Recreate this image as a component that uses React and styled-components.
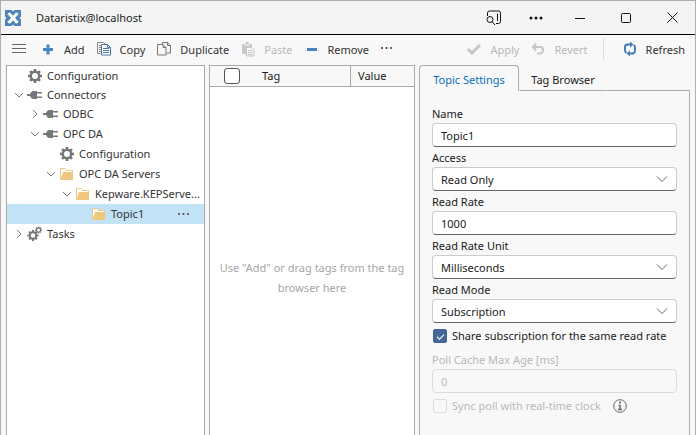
import styled, { createGlobalStyle } from "styled-components";

const GlobalStyle = createGlobalStyle`
  *, *::before, *::after {
    box-sizing: border-box;
  }

  body {
    margin: 0;
    background: #f8f8f8;
    overflow: hidden;
  }

  body, button, input, select {
    font-family: "Noto Sans", "Open Sans", sans-serif;
    font-size: 11px;
  }
`;

const Window = styled.div`
  display: flex;
  flex-direction: column;
  height: 100vh;
  overflow: hidden;
  border: 1px solid #b0b0b0;
  border-bottom: none;
  background: #f8f8f8;
  color: #333;
  line-height: 16px;
`;

const TitleBar = styled.header`
  display: flex;
  align-items: center;
  flex: none;
  height: 34px;
  padding-left: 4px;
  background: #f4f4f4;
  border-bottom: 1px solid #000;
`;

const Title = styled.h1`
  flex: 1;
  margin: 0 0 0 15px;
  font-size: 11px;
  font-weight: 400;
  color: #1a1a1a;
`;

const WindowButton = styled.button`
  display: flex;
  align-items: center;
  justify-content: center;
  width: ${(props) => (props.$narrow ? "42px" : "46px")};
  height: 32px;
  padding: 0;
  border: none;
  background: none;
  color: #111;
`;

const Toolbar = styled.div`
  display: flex;
  align-items: center;
  justify-content: space-between;
  flex: none;
  height: 30px;
  padding: 0 10px 2px;
`;

const ToolGroup = styled.div`
  display: flex;
  align-items: center;
  gap: 11px;
`;

const ToolButton = styled.button`
  display: flex;
  align-items: center;
  gap: 8px;
  height: 24px;
  padding: 0;
  border: none;
  background: none;
  color: #333;
  white-space: nowrap;

  &:disabled {
    color: #b8b8b8;
  }
`;

const Separator = styled.span`
  width: 1px;
  height: 22px;
  margin: 0 7px 0 4px;
  background: #dcdcdc;
`;

const Panels = styled.main`
  display: grid;
  grid-template-columns: minmax(0, 199fr) minmax(0, 206fr) minmax(0, 271fr);
  gap: 4px;
  flex: 1;
  min-height: 0;
  padding: 0 5px;
`;

const TreePanel = styled.nav`
  background: #fff;
  border: 1px solid #aaa;
  border-bottom: none;
`;

const TreeRow = styled.div`
  display: flex;
  align-items: center;
  height: ${(props) => (props.$level === 0 ? "19px" : "20px")};
  padding-left: ${(props) => props.$level * 16 + 4}px;
  background: ${(props) => (props.$selected ? "#c2e2f6" : "transparent")};
`;

const IconBox = styled.span`
  display: flex;
  align-items: center;
  justify-content: center;
  flex: none;
  width: 16px;
  height: 16px;
`;

const TreeLabel = styled.span`
  flex: 1;
  min-width: 0;
  margin-left: 4px;
  white-space: nowrap;
`;

const RowMenuButton = styled.button`
  display: flex;
  align-items: center;
  height: 16px;
  margin-right: 14px;
  padding: 0;
  border: none;
  background: none;
  color: #444;
`;

const TagPanel = styled.section`
  background: #fff;
  border: 1px solid #aaa;
  border-bottom: none;
`;

const TagTable = styled.table`
  width: 100%;
  border-collapse: separate;
  border-spacing: 0;
  table-layout: fixed;
  background: #f8f8f8;
`;

const HeadCell = styled.th`
  width: ${(props) => props.$width || "auto"};
  height: 21px;
  padding: 0 0 0 ${(props) => props.$pad}px;
  border-bottom: 1px solid #aaa;
  border-left: ${(props) => (props.$divided ? "1px solid #aaa" : "none")};
  font-weight: 400;
  text-align: left;
  color: #1a1a1a;
`;

const EmptyMessage = styled.p`
  margin: 0;
  padding: 171px 4px 0;
  line-height: 20px;
  text-align: center;
  color: #a6a6a6;
`;

const SettingsPanel = styled.section`
  display: flex;
  flex-direction: column;
`;

const TabList = styled.div`
  display: flex;
  height: 26px;
`;

const TabFiller = styled.div`
  flex: 1;
  border-bottom: 1px solid #aaa;
`;

const Tab = styled.button`
  width: ${(props) => (props.$active ? "100px" : "88px")};
  padding: 3px 0 0;
  border: 1px solid ${(props) => (props.$active ? "#aaa" : "transparent")};
  border-bottom-color: ${(props) => (props.$active ? "transparent" : "#aaa")};
  border-radius: ${(props) => (props.$active ? "4px 4px 0 0" : "0")};
  background: none;
  color: ${(props) => (props.$active ? "#0a6ebd" : "#1a1a1a")};
  white-space: nowrap;
`;

const Form = styled.form`
  flex: 1;
  padding: 12px 12px 0;
  border: 1px solid #aaa;
  border-width: 0 1px;
  color: #1a1a1a;
`;

const Label = styled.label`
  display: block;
  height: 20px;
  padding-top: 3px;
  color: ${(props) => (props.$disabled ? "#b8b8b8" : "inherit")};
`;

const FieldBox = styled.div`
  display: grid;
  align-items: center;
  height: 24px;
`;

const Input = styled.input`
  width: 100%;
  height: 24px;
  padding: 0 8px;
  border: 1px solid #ccc;
  border-bottom-color: #666;
  border-radius: 4px;
  background: #fff;
  color: #1a1a1a;

  &:disabled {
    border-color: #dcdcdc;
    background: #f8f8f8;
    color: #b8b8b8;
  }
`;

const Select = styled.select`
  grid-area: 1 / 1;
  width: 100%;
  height: 24px;
  padding: 0 28px 0 8px;
  appearance: none;
  border: 1px solid #ccc;
  border-bottom-color: #666;
  border-radius: 4px;
  background: #fff;
  color: #1a1a1a;
`;

const SelectArrow = styled.span`
  grid-area: 1 / 1;
  justify-self: end;
  display: flex;
  margin-right: 9px;
  pointer-events: none;
`;

const CheckRow = styled.div`
  display: flex;
  align-items: center;
  height: 26px;
  padding-left: 1px;
  white-space: nowrap;
  color: ${(props) => (props.$disabled ? "#b8b8b8" : "inherit")};
`;

const CheckLabel = styled.label`
  margin: 0 12px 0 5px;
`;

const Checkbox = styled.input`
  appearance: none;
  display: grid;
  place-items: center;
  flex: none;
  width: 14px;
  height: 14px;
  margin: 0;
  border: 1px solid #dcdcdc;
  border-radius: 2px;

  &:checked {
    border-color: #3f6190;
    background: #456896;
  }

  &:checked::before {
    content: "";
    width: 7px;
    height: 4px;
    border: solid #fff;
    border-width: 0 0 1px 1px;
    transform: rotate(-45deg);
  }
`;

const SelectAll = styled(Checkbox)`
  width: 16px;
  height: 16px;
  border-color: #555;
  border-radius: 3px;
  background: #fff;
`;

const Logo = () => (
  <svg width="16" height="16" viewBox="0 0 16 16" aria-hidden="true">
    <rect width="16" height="16" fill="#4d83b8" />
    <path d="M4 3.500l8 9M12 3.500l-8 9" stroke="#fff" strokeWidth="3" />
    <path d="M6.500 0h3L8 1.500zM6.500 16h3L8 14.500zM0 6.500v3L1.500 8zM16 6.500v3L14.500 8z" fill="#f4f4f4" />
    <path d="M2.500 4.500l2-2M11.500 2.500l2 2M2.500 11.500l2 2M13.500 11.500l-2 2" stroke="#fff" />
  </svg>
);

const SearchPaneIcon = () => (
  <svg width="16" height="16" viewBox="0 0 16 16" fill="none" stroke="currentColor" aria-hidden="true">
    <path d="M1.500 6V3a2 2 0 0 1 2-2h9a2 2 0 0 1 2 2v8.500a2 2 0 0 1-2 2H10M11.500 3.500v7.500" />
    <circle cx="4" cy="9.500" r="3" />
    <path d="M6.200 11.700L9 15" />
  </svg>
);

const DotsIcon = ({ size = 1.5, width = 13, height = 4 }) => (
  <svg width={width} height={height} viewBox={`0 0 ${width} ${height}`} fill="currentColor" aria-hidden="true">
    <circle cx="2" cy="2" r={size} />
    <circle cx={width / 2} cy="2" r={size} />
    <circle cx={width - 2} cy="2" r={size} />
  </svg>
);

const MinimizeIcon = () => (
  <svg width="10" height="10" viewBox="0 0 10 10" stroke="currentColor" aria-hidden="true">
    <path d="M0 5.500h10" />
  </svg>
);

const MaximizeIcon = () => (
  <svg width="10" height="10" viewBox="0 0 10 10" fill="none" stroke="currentColor" aria-hidden="true">
    <rect x="0.500" y="0.500" width="9" height="9" rx="1" />
  </svg>
);

const CloseIcon = () => (
  <svg width="11" height="11" viewBox="0 0 11 11" stroke="currentColor" aria-hidden="true">
    <path d="M0.500 0.500l10 10M10.500 0.500l-10 10" />
  </svg>
);

const MenuIcon = () => (
  <svg width="18" height="16" viewBox="0 0 18 16" stroke="#666" aria-hidden="true">
    <path d="M1 3.500h14M1 7.500h14M1 11.500h14" />
  </svg>
);

const PlusIcon = () => (
  <svg width="16" height="16" viewBox="0 0 16 16" stroke="#4a86c0" strokeWidth="3" aria-hidden="true">
    <path d="M3 8.500h10M8 3.500v10" />
  </svg>
);

const MinusIcon = () => (
  <svg width="16" height="16" viewBox="0 0 16 16" stroke="#4a86c0" strokeWidth="3" aria-hidden="true">
    <path d="M3 8.500h10" />
  </svg>
);

const CopyIcon = () => (
  <svg width="16" height="16" viewBox="0 0 16 16" fill="none" aria-hidden="true">
    <path d="M4.500 12.500h-3v-11h6l1.500 1.500M3 4.500h2M3 6.500h2M3 8.500h2M3 10.500h2" stroke="#888" />
    <path d="M5.500 3.500h6l3 3v7.500h-9z" fill="#fff" stroke="#4a78a8" />
    <path d="M11.500 3.500v3h3M7 7.500h6M7 9.500h6M7 11.500h6" stroke="#4a78a8" />
  </svg>
);

const DuplicateIcon = () => (
  <svg width="16" height="16" viewBox="0 0 16 16" fill="none" stroke="#777" aria-hidden="true">
    <path d="M6.500 3V1.500h5l3 3v7.500h-4M11.500 1.500v3h3" />
    <path d="M1.500 3.500h5.500l3 3v7.500h-8.500zM7 3.500v3h3" />
  </svg>
);

const PasteIcon = () => (
  <svg width="16" height="16" viewBox="0 0 16 16" aria-hidden="true">
    <path d="M2 3h3a2 2 0 0 1 4 0h3v10H2z" fill="#c8c8c8" />
    <path d="M4 4h6" stroke="#f8f8f8" />
    <path d="M6.500 6.500h5l2.500 2.500v6H6.500z" fill="#f8f8f8" stroke="#c4c4c4" />
    <path d="M8 9.500h4M8 11.500h4.500M8 13.500h4.500" stroke="#c4c4c4" />
  </svg>
);

const CheckIcon = () => (
  <svg width="16" height="16" viewBox="0 0 16 16" fill="none" stroke="#c6c6c6" strokeWidth="3" aria-hidden="true">
    <path d="M2 8l4 4L14 4" />
  </svg>
);

const RevertIcon = () => (
  <svg width="16" height="16" viewBox="0 0 16 16" fill="none" stroke="#c6c6c6" strokeWidth="2" aria-hidden="true">
    <path d="M6 2.500L3 6l3 3.500M3.500 6H10a3 3 0 0 1 3 3v.5a3 3 0 0 1-3 3H7" />
  </svg>
);

const RefreshIcon = () => (
  <svg width="16" height="16" viewBox="0 0 16 16" aria-hidden="true">
    <path d="M6 3.500H5.500A2.500 2.500 0 0 0 3 6v3.500a2.500 2.500 0 0 0 1.500 2.300M10 12.500h.5A2.500 2.500 0 0 0 13 10V6.500a2.500 2.500 0 0 0-1.500-2.300" fill="none" stroke="#4a7fb5" strokeWidth="2" />
    <path d="M5 2.500h3V.5l3.500 3L8 6.500v-2H5zM11 13.500H8v2l-3.500-3L8 9.500v2h3z" fill="#4a7fb5" />
  </svg>
);

const ChevronIcon = ({ open }) => (
  <svg width="10" height="10" viewBox="0 0 10 10" fill="none" stroke="#777" aria-hidden="true">
    <path d={open ? "M1 3l4 4 4-4" : "M3 1l4 4-4 4"} />
  </svg>
);

const teeth = [0, 45, 90, 135, 180, 225, 270, 315];

const Gear = ({ cx, cy, r }) => (
  <g transform={`translate(${cx} ${cy}) scale(${r / 7})`}>
    <circle r="4.200" fill="none" stroke="#777" strokeWidth="2.400" />
    {teeth.map((angle) => (
      <rect key={angle} x="-1.300" y="-7" width="2.600" height="3" fill="#777" transform={`rotate(${angle})`} />
    ))}
  </g>
);

const GearIcon = () => (
  <svg width="16" height="16" viewBox="0 0 16 16" aria-hidden="true">
    <Gear cx={8} cy={8} r={7} />
  </svg>
);

const GearsIcon = () => (
  <svg width="16" height="16" viewBox="0 0 16 16" aria-hidden="true">
    <Gear cx={6} cy={9.5} r={5.5} />
    <Gear cx={11.5} cy={4} r={3.5} />
  </svg>
);

const PlugIcon = () => (
  <svg width="16" height="16" viewBox="0 0 16 16" fill="#777" aria-hidden="true">
    <path d="M0 7h3c1-2.500 2.500-3 4-3h3v8H7c-1.500 0-3-.5-4-3H0z" />
    <path d="M10 5h5v1.500h-5zM10 9.500h5V11h-5z" />
  </svg>
);

const FolderIcon = () => (
  <svg width="16" height="16" viewBox="0 0 16 16" aria-hidden="true">
    <path d="M1.500 13.500v-11h4.500l1.500 2h6v2" fill="#fff" stroke="#ecc581" />
    <path d="M4 6h10v8H1.500z" fill="#efc77f" />
  </svg>
);

const ArrowDownIcon = () => (
  <svg width="12" height="8" viewBox="0 0 12 8" fill="none" stroke="#666" aria-hidden="true">
    <path d="M1 1.500l5 5 5-5" />
  </svg>
);

const InfoIcon = () => (
  <svg width="14" height="14" viewBox="0 0 14 14" fill="none" stroke="#666" role="img" aria-label="Info">
    <circle cx="7" cy="7" r="6.300" />
    <path d="M7 6v5M5.500 6.500H7M5 10.500h4" strokeWidth="1.500" />
    <path d="M6.200 3.500h1.800" strokeWidth="2" />
  </svg>
);

const treeItems = [
  { label: "Configuration", level: 0, icon: GearIcon },
  { label: "Connectors", level: 0, icon: PlugIcon, open: true },
  { label: "ODBC", level: 1, icon: PlugIcon, open: false },
  { label: "OPC DA", level: 1, icon: PlugIcon, open: true },
  { label: "Configuration", level: 2, icon: GearIcon },
  { label: "OPC DA Servers", level: 2, icon: FolderIcon, open: true },
  { label: "Kepware.KEPServe...", level: 3, icon: FolderIcon, open: true },
  { label: "Topic1", level: 4, icon: FolderIcon, selected: true },
  { label: "Tasks", level: 0, icon: GearsIcon, open: false },
];

const TextField = ({ id, label, value, disabled }) => (
  <>
    <Label htmlFor={id} $disabled={disabled}>{label}</Label>
    <FieldBox>
      <Input id={id} defaultValue={value} disabled={disabled} />
    </FieldBox>
  </>
);

const SelectField = ({ id, label, value }) => (
  <>
    <Label htmlFor={id}>{label}</Label>
    <FieldBox>
      <Select id={id} defaultValue={value}>
        <option>{value}</option>
      </Select>
      <SelectArrow>
        <ArrowDownIcon />
      </SelectArrow>
    </FieldBox>
  </>
);

const App = () => {
  return (
    <Window>
      <GlobalStyle />
      <TitleBar>
        <Logo />
        <Title>Dataristix@localhost</Title>
        <WindowButton $narrow aria-label="Search"><SearchPaneIcon /></WindowButton>
        <WindowButton $narrow aria-label="More"><DotsIcon width={14} /></WindowButton>
        <WindowButton aria-label="Minimize"><MinimizeIcon /></WindowButton>
        <WindowButton aria-label="Maximize"><MaximizeIcon /></WindowButton>
        <WindowButton aria-label="Close"><CloseIcon /></WindowButton>
      </TitleBar>

      <Toolbar>
        <ToolGroup>
          <ToolButton aria-label="Menu"><MenuIcon /></ToolButton>
          <ToolButton><PlusIcon />Add</ToolButton>
          <ToolButton><CopyIcon />Copy</ToolButton>
          <ToolButton><DuplicateIcon />Duplicate</ToolButton>
          <ToolButton disabled><PasteIcon />Paste</ToolButton>
          <ToolButton><MinusIcon />Remove</ToolButton>
          <ToolButton aria-label="More actions"><DotsIcon size={1} height={6} /></ToolButton>
        </ToolGroup>
        <ToolGroup>
          <ToolButton disabled><CheckIcon />Apply</ToolButton>
          <ToolButton disabled><RevertIcon />Revert</ToolButton>
          <Separator />
          <ToolButton><RefreshIcon />Refresh</ToolButton>
        </ToolGroup>
      </Toolbar>

      <Panels>
        <TreePanel>
          {treeItems.map((item, index) => (
            <TreeRow key={index} $level={item.level} $selected={item.selected}>
              <IconBox>{item.open !== undefined && <ChevronIcon open={item.open} />}</IconBox>
              <IconBox><item.icon /></IconBox>
              <TreeLabel>{item.label}</TreeLabel>
              {item.selected && (
                <RowMenuButton aria-label="Topic actions"><DotsIcon size={1} /></RowMenuButton>
              )}
            </TreeRow>
          ))}
        </TreePanel>

        <TagPanel>
          <TagTable>
            <thead>
              <tr>
                <HeadCell $width="40px" $pad={14}>
                  <SelectAll type="checkbox" aria-label="Select all" />
                </HeadCell>
                <HeadCell $pad={12}>Tag</HeadCell>
                <HeadCell $width="64px" $pad={7} $divided>Value</HeadCell>
              </tr>
            </thead>
          </TagTable>
          <EmptyMessage>Use "Add" or drag tags from the tag browser here</EmptyMessage>
        </TagPanel>

        <SettingsPanel>
          <TabList role="tablist">
            <Tab role="tab" aria-selected="true" $active>Topic Settings</Tab>
            <Tab role="tab" aria-selected="false">Tag Browser</Tab>
            <TabFiller />
          </TabList>
          <Form>
            <TextField id="name" label="Name" value="Topic1" />
            <SelectField id="access" label="Access" value="Read Only" />
            <TextField id="rate" label="Read Rate" value="1000" />
            <SelectField id="unit" label="Read Rate Unit" value="Milliseconds" />
            <SelectField id="mode" label="Read Mode" value="Subscription" />
            <CheckRow>
              <Checkbox type="checkbox" id="share" defaultChecked />
              <CheckLabel htmlFor="share">Share subscription for the same read rate</CheckLabel>
            </CheckRow>
            <TextField id="cache" label="Poll Cache Max Age [ms]" value="0" disabled />
            <CheckRow $disabled>
              <Checkbox type="checkbox" id="sync" disabled />
              <CheckLabel htmlFor="sync">Sync poll with real-time clock</CheckLabel>
              <InfoIcon />
            </CheckRow>
          </Form>
        </SettingsPanel>
      </Panels>
    </Window>
  );
};

export default App;
